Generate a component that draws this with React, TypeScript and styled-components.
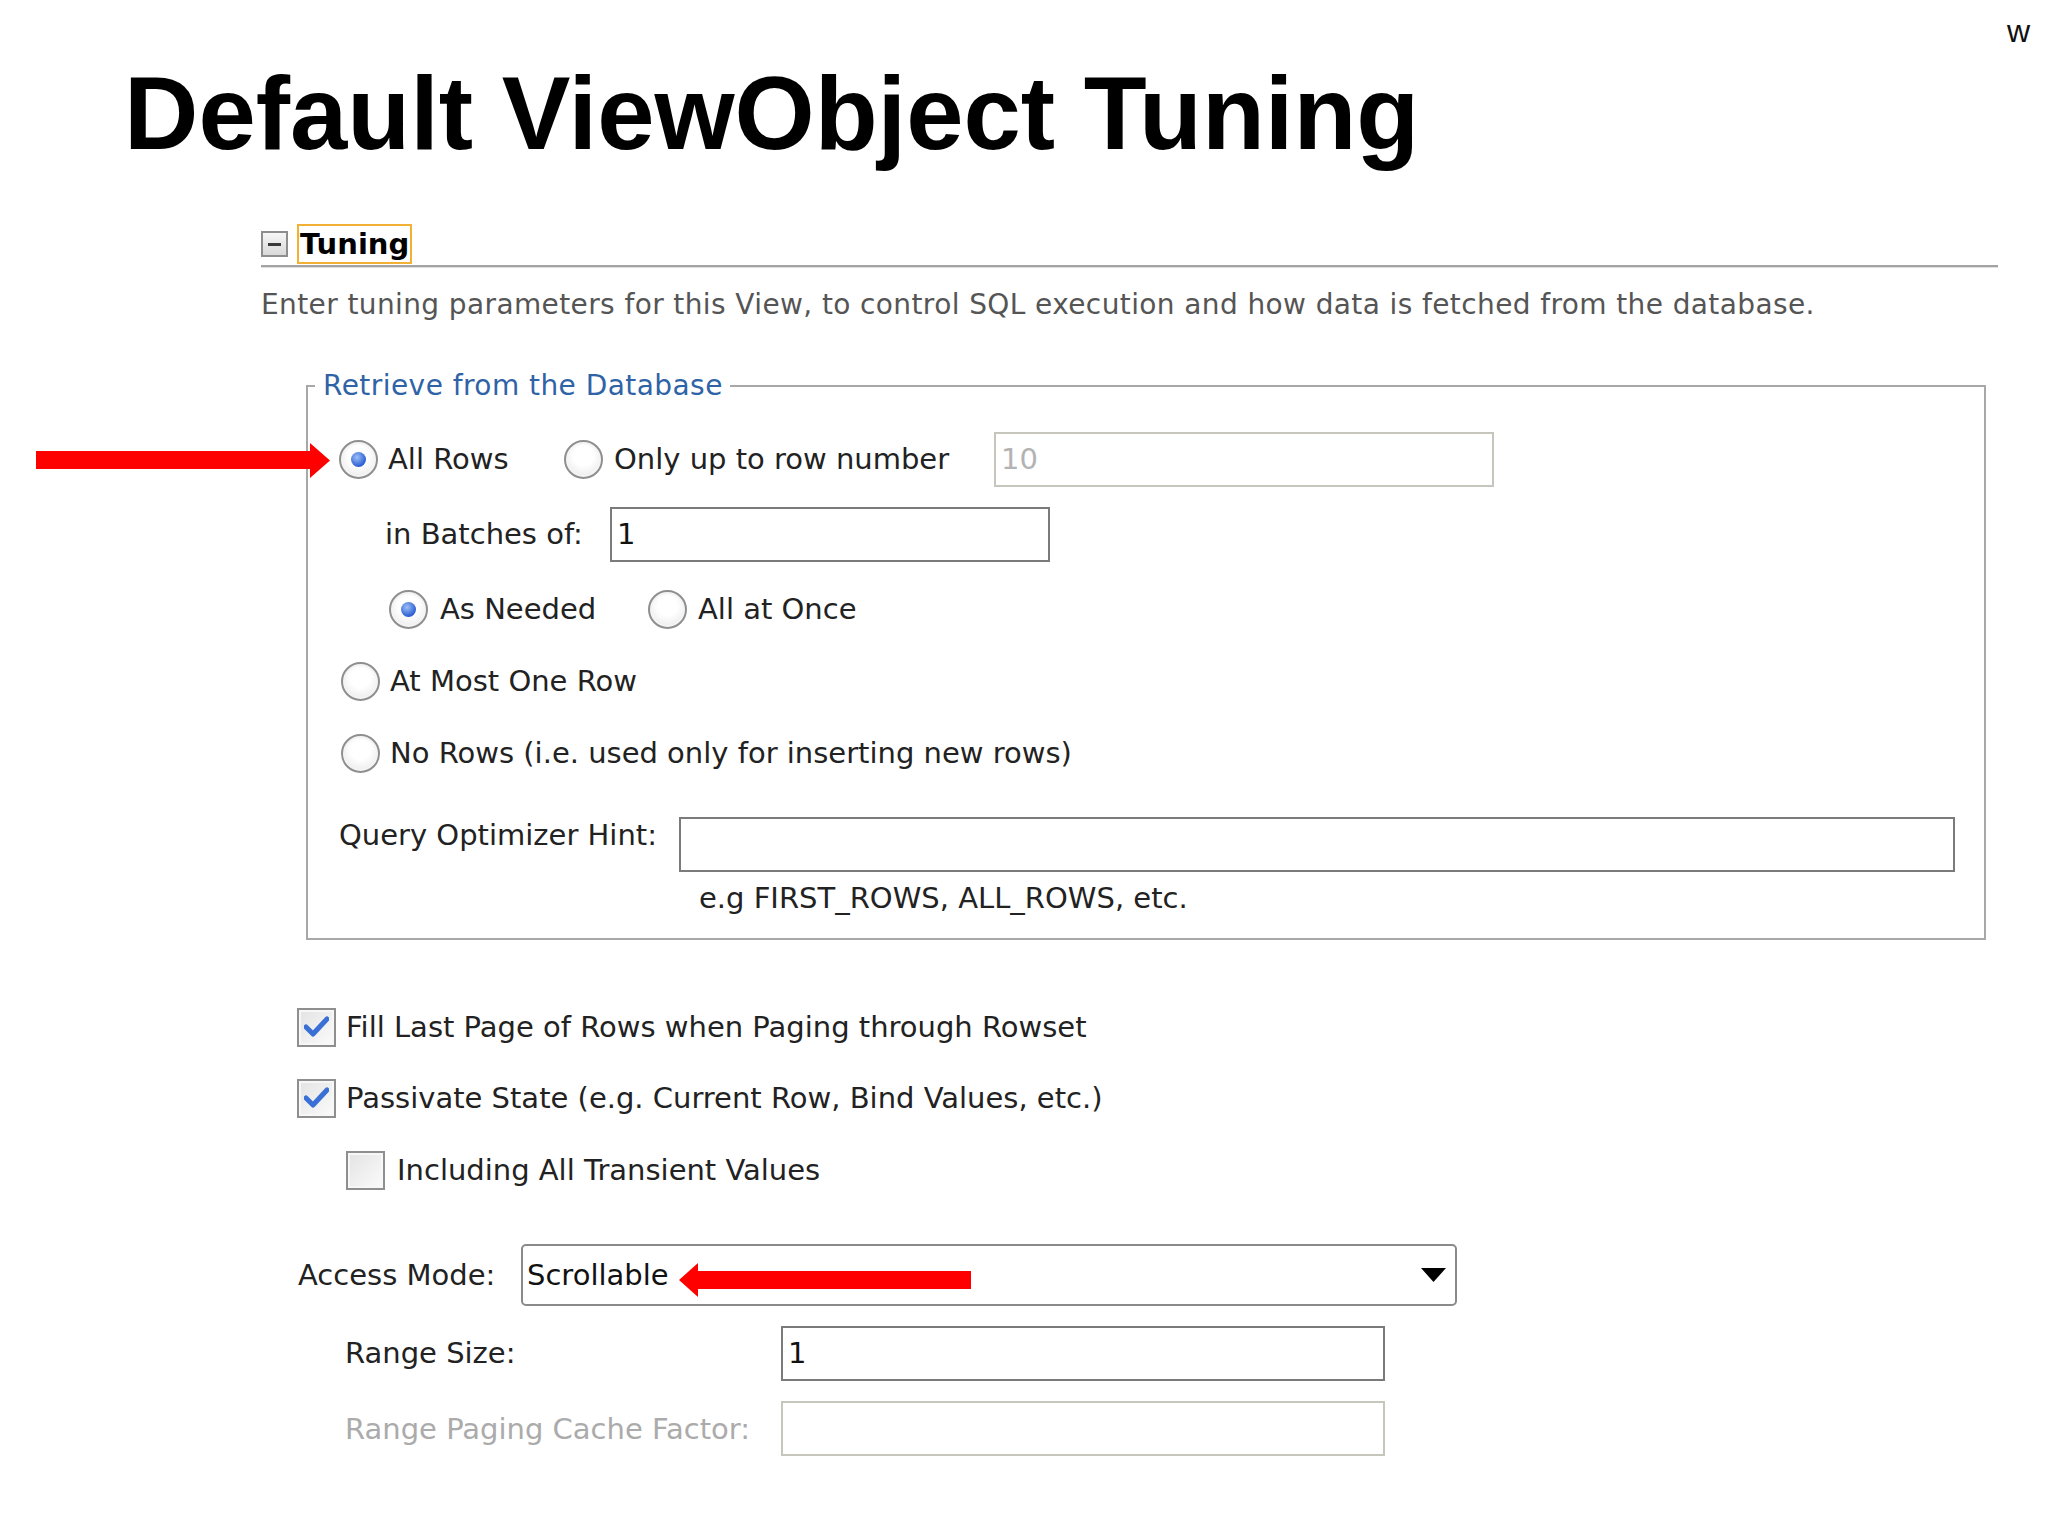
import React from "react";
import styled, { createGlobalStyle, css } from "styled-components";

const GlobalStyle = createGlobalStyle`
  html, body { margin: 0; padding: 0; background: #ffffff; }
  body { font-family: "DejaVu Sans", "Liberation Sans", sans-serif; }
  * { box-sizing: border-box; }
`;

const Page = styled.div`
  position: relative;
  width: 2048px;
  height: 1536px;
  overflow: hidden;
  background: #ffffff;
  padding-top: 11px;
`;

const CornerMark = styled.div`
  height: 40px;
  line-height: 40px;
  text-align: right;
  padding-right: 18px;
  font-family: "Liberation Sans", Arial, sans-serif;
  font-size: 32px;
  color: #111;
`;

const Title = styled.h1`
  margin: 11px 0 0 124px;
  font-family: "Liberation Sans", Arial, sans-serif;
  font-weight: 700;
  font-size: 103px;
  line-height: 103px;
  color: #000;
`;

const Panel = styled.section`
  margin: 58px 0 0 261px;
  width: 1737px;
  font-family: "DejaVu Sans", "Liberation Sans", sans-serif;
  color: #222;
`;

const SectionHeader = styled.div`
  display: flex;
  align-items: center;
  gap: 9px;
  height: 44px;
  border-bottom: 2px solid #a3a3a3;
  box-shadow: 0 1px 0 #dedede;
`;

const ToggleBox = styled.span`
  flex: none;
  width: 27px;
  height: 26px;
  border: 2px solid #8e8e8e;
  background: linear-gradient(#f6f6f6, #d9d9d9);
  display: flex;
  align-items: center;
  justify-content: center;
  &::after {
    content: "";
    width: 13px;
    height: 3px;
    background: #3a3a3a;
  }
`;

const SectionTitle = styled.span`
  height: 40px;
  padding: 0 1px;
  border: 2px solid #f2b134;
  font-weight: 700;
  font-size: 29px;
  line-height: 36px;
  color: #000;
`;

const Description = styled.p`
  margin: 18px 0 0 0;
  font-size: 28px;
  letter-spacing: 0.39px;
  line-height: 40px;
  color: #555;
  white-space: nowrap;
`;

const Group = styled.fieldset`
  margin: 41px 0 0 45px;
  width: 1680px;
  padding: 0;
  min-inline-size: 0;
  border: 2px solid #a8a8a8;
`;

const GroupLegend = styled.legend`
  margin-left: 7px;
  padding: 0 7px 0 8px;
  font-size: 28px;
  letter-spacing: 0.45px;
  line-height: 40px;
  color: #2f63a6;
`;

const GroupBody = styled.div`
  display: flex;
  flex-direction: column;
  padding: 25px 29px 20px 31px;
`;

const Row = styled.div<{ $gap?: number; $h?: number; $indent?: number }>`
  display: flex;
  align-items: center;
  height: ${(p) => p.$h ?? 40}px;
  margin-top: ${(p) => p.$gap ?? 0}px;
  padding-left: ${(p) => p.$indent ?? 0}px;
`;

const Label = styled.span<{ $w?: number; $muted?: boolean; $lift?: number }>`
  font-size: 29px;
  line-height: 40px;
  white-space: nowrap;
  color: ${(p) => (p.$muted ? "#ababab" : "#222")};
  margin-bottom: ${(p) => (p.$lift ?? 0) * 2}px;
  ${(p) =>
    p.$w &&
    css`
      width: ${p.$w}px;
      flex: none;
    `}
`;

const Option = styled.label<{ $w?: number; $gap?: number }>`
  display: flex;
  align-items: center;
  gap: ${(p) => p.$gap ?? 10}px;
  ${(p) =>
    p.$w &&
    css`
      width: ${p.$w}px;
      flex: none;
    `}
`;

const RadioMark = styled.span<{ $checked?: boolean }>`
  position: relative;
  flex: none;
  width: 39px;
  height: 39px;
  border-radius: 50%;
  border: 2px solid #8f8f8f;
  background: radial-gradient(circle at 50% 40%, #ffffff 35%, #e2e2e2 100%);
  box-shadow: inset 0 0 0 2px #f4f4f4;
  &::after {
    content: "";
    position: absolute;
    left: 50%;
    top: 50%;
    width: 15px;
    height: 15px;
    margin: -7.5px 0 0 -7.5px;
    border-radius: 50%;
    background: radial-gradient(circle at 40% 35%, #9cbff7, #2c5ed2 70%);
    display: ${(p) => (p.$checked ? "block" : "none")};
  }
`;

const CheckMark = styled.span`
  flex: none;
  width: 39px;
  height: 39px;
  border: 2px solid #8f8f8f;
  background: linear-gradient(135deg, #e3e3e3, #fbfbfb);
  box-shadow: inset 0 0 0 2px #f7f7f7;
  display: flex;
  align-items: center;
  justify-content: center;
`;

const Field = styled.div<{ $w: number; $disabled?: boolean }>`
  flex: none;
  width: ${(p) => p.$w}px;
  height: 55px;
  border: 2px solid ${(p) => (p.$disabled ? "#c6c6bd" : "#7b7b7b")};
  padding-left: 5px;
  font-size: 29px;
  line-height: 51px;
  color: ${(p) => (p.$disabled ? "#b3b3b3" : "#111")};
  background: #fff;
`;

const Select = styled.div`
  flex: none;
  width: 936px;
  height: 62px;
  border: 2px solid #8a8a8a;
  border-radius: 5px;
  display: flex;
  align-items: center;
  justify-content: space-between;
  padding: 0 9px 0 4px;
  font-size: 29px;
  color: #111;
  background: #fff;
`;

const Annotation = styled.svg<{ $x: number; $y: number }>`
  position: absolute;
  left: ${(p) => p.$x}px;
  top: ${(p) => p.$y}px;
`;

function Radio({ checked, children, w, gap }: { checked?: boolean; children: React.ReactNode; w?: number; gap?: number }) {
  return (
    <Option $w={w} $gap={gap}>
      <RadioMark $checked={checked} />
      <Label>{children}</Label>
    </Option>
  );
}

function Check({ checked, children, gap }: { checked?: boolean; children: React.ReactNode; gap?: number }) {
  return (
    <Option $gap={gap}>
      <CheckMark>
        {checked && (
          <svg width="25" height="22" viewBox="0 0 25 22">
            <path d="M2 11 L9 18 L23 3" fill="none" stroke="#3a6fd6" strokeWidth="5" strokeLinecap="round" strokeLinejoin="round" />
          </svg>
        )}
      </CheckMark>
      <Label>{children}</Label>
    </Option>
  );
}

export default function App() {
  return (
    <>
      <GlobalStyle />
      <Page>
        <CornerMark>w</CornerMark>
        <Title>Default ViewObject Tuning</Title>
        <Panel>
          <SectionHeader>
            <ToggleBox />
            <SectionTitle>Tuning</SectionTitle>
          </SectionHeader>
          <Description>
            Enter tuning parameters for this View, to control SQL execution and how data is fetched from the database.
          </Description>
          <Group>
            <GroupLegend>Retrieve from the Database</GroupLegend>
            <GroupBody>
              <Row $h={56}>
                <Radio checked w={225}>All Rows</Radio>
                <Radio w={430} gap={11}>Only up to row number</Radio>
                <Field $w={500} $disabled>10</Field>
              </Row>
              <Row $h={56} $gap={19} $indent={46}>
                <Label $w={225}>in Batches of:</Label>
                <Field $w={440}>1</Field>
              </Row>
              <Row $gap={27} $indent={50}>
                <Radio checked w={259} gap={12}>As Needed</Radio>
                <Radio gap={11}>All at Once</Radio>
              </Row>
              <Row $gap={32} $indent={2}>
                <Radio>At Most One Row</Radio>
              </Row>
              <Row $gap={32} $indent={2}>
                <Radio>No Rows (i.e. used only for inserting new rows)</Radio>
              </Row>
              <Row $h={56} $gap={43} $indent={0}>
                <Label $w={340} $lift={9}>Query Optimizer Hint:</Label>
                <Field $w={1276} />
              </Row>
              <Row $gap={6} $indent={360}>
                <Label>e.g FIRST_ROWS, ALL_ROWS, etc.</Label>
              </Row>
            </GroupBody>
          </Group>
          <Row $gap={67} $indent={36}>
            <Check checked>Fill Last Page of Rows when Paging through Rowset</Check>
          </Row>
          <Row $gap={31} $indent={36}>
            <Check checked>Passivate State (e.g. Current Row, Bind Values, etc.)</Check>
          </Row>
          <Row $gap={32} $indent={85}>
            <Check gap={12}>Including All Transient Values</Check>
          </Row>
          <Row $h={62} $gap={54} $indent={37}>
            <Label $w={223}>Access Mode:</Label>
            <Select>
              <span>Scrollable</span>
              <svg width="25" height="14" viewBox="0 0 25 14">
                <path d="M0 0 H25 L12.5 14 Z" fill="#000" />
              </svg>
            </Select>
          </Row>
          <Row $h={56} $gap={19} $indent={84}>
            <Label $w={436}>Range Size:</Label>
            <Field $w={604}>1</Field>
          </Row>
          <Row $h={55} $gap={20} $indent={84}>
            <Label $w={436} $muted>Range Paging Cache Factor:</Label>
            <Field $w={604} $disabled />
          </Row>
        </Panel>
        <Annotation $x={36} $y={443} width="294" height="35" viewBox="0 0 294 35">
          <path d="M0 8 H274 V0 L294 17.5 L274 35 V26 H0 Z" fill="#ff0000" />
        </Annotation>
        <Annotation $x={679} $y={1263} width="292" height="34" viewBox="0 0 292 34">
          <path d="M0 17 L19 0 V8 H292 V26 H19 V34 Z" fill="#ff0000" />
        </Annotation>
      </Page>
    </>
  );
}
